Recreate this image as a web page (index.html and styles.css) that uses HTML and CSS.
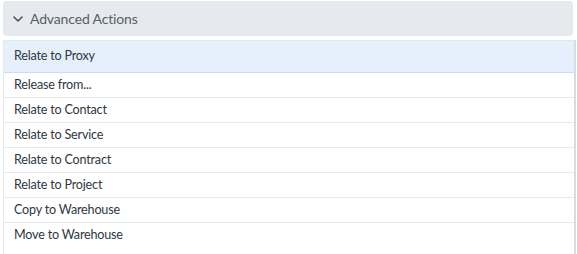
FILE: index.html
```html
<!DOCTYPE html>
<html lang="en">
<head>
    <meta charset="UTF-8">
    <title>Advanced Actions</title>
    <link rel="stylesheet" href="styles.css">
</head>
<body>
    <div class="panel">
        <div class="panel-header">
            <svg class="chevron" width="10" height="6" viewBox="0 0 10 6">
                <path d="M1 1l4 4 4-4" fill="none" stroke="currentColor" stroke-width="1.6" stroke-linecap="round" stroke-linejoin="round"/>
            </svg>
            <span>Advanced Actions</span>
        </div>
        <ul class="action-list">
            <li class="action-item active">Relate to Proxy</li>
            <li class="action-item">Release from...</li>
            <li class="action-item">Relate to Contact</li>
            <li class="action-item">Relate to Service</li>
            <li class="action-item">Relate to Contract</li>
            <li class="action-item">Relate to Project</li>
            <li class="action-item">Copy to Warehouse</li>
            <li class="action-item last">Move to Warehouse</li>
        </ul>
    </div>
</body>
</html>
```
FILE: styles.css
```css
* {
    margin: 0;
    padding: 0;
    box-sizing: border-box;
}

html, body {
    height: 100%;
    overflow: hidden;
}

body {
    font-family: Lato, "Noto Sans", sans-serif;
    background: white;
    padding: 1px 1px 0 3px;
}

.panel {
    height: 100%;
    display: flex;
    flex-direction: column;
}

.panel-header {
    background-color: #e6e9ed;
    color: #565e6a;
    flex: 0 0 35px;
    margin-right: 3px;
    border-radius: 4px;
    display: flex;
    align-items: center;
    padding-left: 10px;
    font-size: 14px;
    letter-spacing: -0.15px;
}

.chevron {
    color: #4b5360;
    margin-right: 7px;
}

.action-list {
    flex: 1;
    list-style: none;
    margin-top: 4px;
    border-left: 1px solid #e3e6ea;
    border-top: 1px solid #e3e6ea;
    border-right: 2px solid #d8dbe0;
}

.action-item {
    height: 25px;
    line-height: 23px;
    padding-left: 10px;
    font-size: 12.6px;
    letter-spacing: -0.2px;
    color: #2f3742;
    border-bottom: 1px solid #e6e8eb;
}

.action-item.active {
    height: 32px;
    line-height: 30px;
    background-color: #e6f0fd;
    border-bottom-color: #cddcf1;
}

.action-item.last {
    border-bottom: none;
}
```
